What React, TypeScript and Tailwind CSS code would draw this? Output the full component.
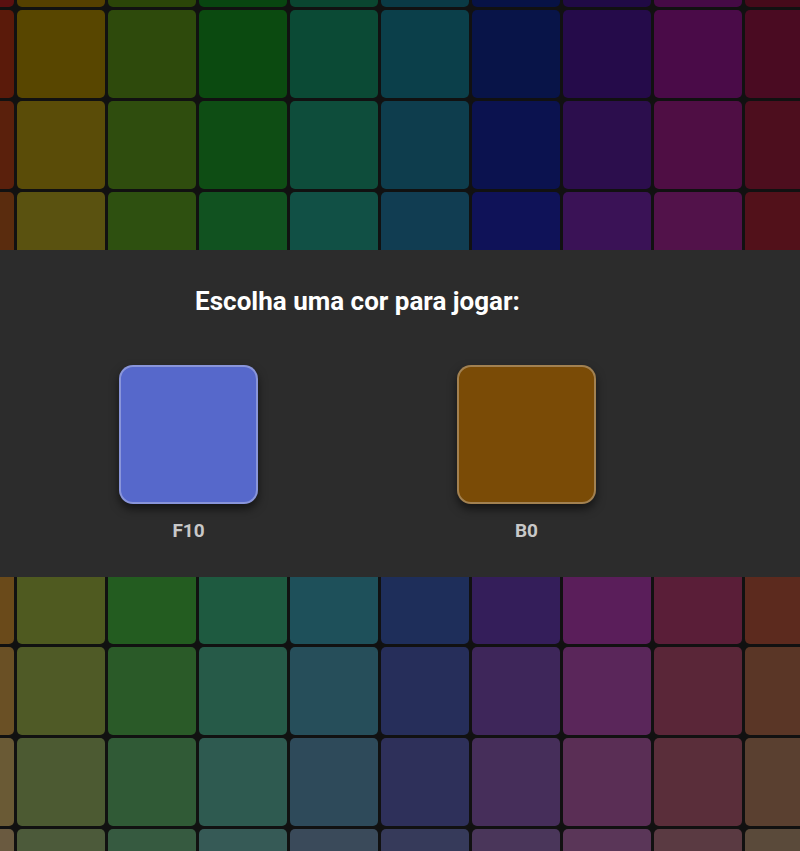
import React from "react";

const rows: string[][] = [
  ["#5a1010", "#554000", "#2b4508", "#084510", "#0a4530", "#0a3a45", "#071245", "#200a45", "#450a45", "#450a1a"],
  ["#5a1a0a", "#584600", "#2e4a0c", "#0b4a10", "#0b4a35", "#0b3f4a", "#081448", "#250b4a", "#4a0b48", "#4a0b22"],
  ["#5a200c", "#5a4c08", "#2f4d0e", "#0e4d14", "#0e4d3b", "#0e3d4d", "#0b124f", "#2c0e4d", "#4f0e44", "#4d0e1e"],
  ["#5a2c0e", "#5a5210", "#2e5010", "#115220", "#115045", "#113d52", "#0f1258", "#3a1256", "#52124a", "#52111a"],
  ["#5e3412", "#565614", "#2a5414", "#145428", "#14524c", "#143a56", "#141656", "#3c1656", "#56164e", "#561a1a"],
  ["#623c14", "#545818", "#265818", "#185830", "#185252", "#183658", "#1a1a58", "#381a58", "#581a52", "#581e1a"],
  ["#66441a", "#52581c", "#245a1c", "#1c5a38", "#1c5258", "#1c325a", "#2a1c5a", "#361c5a", "#5a1c56", "#5a241c"],
  ["#6a4a1a", "#4f5a20", "#235c20", "#1e5a40", "#1e505a", "#1e2e5a", "#341e5a", "#5a1e5a", "#5a1e38", "#5c2a1e"],
  ["#6a5025", "#4f5a26", "#2a5a28", "#265a48", "#264e5a", "#262e5a", "#3e265a", "#5a265a", "#5a2638", "#5a3626"],
  ["#6a5a35", "#4c5a32", "#305a36", "#2e5a50", "#2e4a5a", "#2e305a", "#462e5a", "#5a2e55", "#5a2e3a", "#5a4030"],
  ["#6a5a40", "#4c5a3a", "#365a40", "#365a56", "#3a4a5a", "#363a5a", "#4a365a", "#5a3658", "#5a3a42", "#5a4a3a"],
];

function Swatch({ color, label }: { color: string; label: string }) {
  return (
    <div className="flex flex-col items-center">
      <div
        className="h-[139px] w-[139px] rounded-[14px] border-2 border-[rgba(255,255,255,0.3)] shadow-[0_5px_10px_rgba(0,0,0,0.55)]"
        style={{ backgroundColor: color }}
      />
      <div className="mt-[15px] text-[19px] font-bold leading-6 text-[#c8c8c8]">{label}</div>
    </div>
  );
}

export default function App() {
  return (
    <div className="relative h-[851px] w-[800px] overflow-hidden bg-[#111111] font-['Roboto','Noto_Sans',sans-serif]">
      <div className="ml-[-74px] mt-[-81px] grid grid-cols-[repeat(10,88px)] grid-rows-[repeat(11,88px)] gap-[3px]">
        {rows.flatMap((row, r) =>
          row.map((c, i) => (
            <div key={`${r}-${i}`} className="rounded-[5px]" style={{ backgroundColor: c }} />
          ))
        )}
      </div>
      <div className="absolute left-0 right-0 top-[250px] h-[327px] bg-[#2c2c2c]">
        <div className="flex w-[715px] flex-col items-center pt-[35px]">
          <h2 className="text-[26px] font-bold leading-8 text-white">Escolha uma cor para jogar:</h2>
          <div className="mt-[48px] flex gap-[199px]">
            <Swatch color="#5668cb" label="F10" />
            <Swatch color="#7a4b06" label="B0" />
          </div>
        </div>
      </div>
    </div>
  );
}
